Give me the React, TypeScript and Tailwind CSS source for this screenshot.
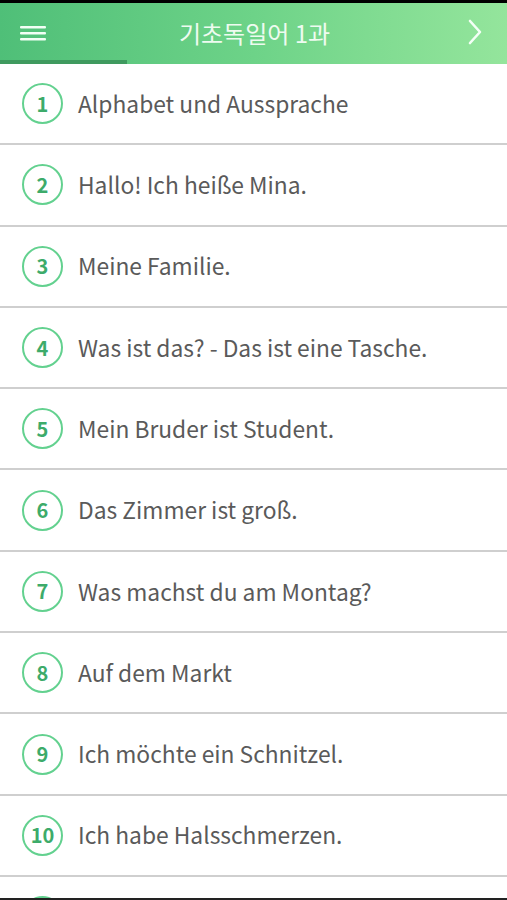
const lessons = [
  "Alphabet und Aussprache",
  "Hallo! Ich heiße Mina.",
  "Meine Familie.",
  "Was ist das? - Das ist eine Tasche.",
  "Mein Bruder ist Student.",
  "Das Zimmer ist groß.",
  "Was machst du am Montag?",
  "Auf dem Markt",
  "Ich möchte ein Schnitzel.",
  "Ich habe Halsschmerzen.",
  "Wie komme ich zum Bahnhof?",
];

function Row({ n, title }: { n: number; title: string }) {
  return (
    <div className="h-[81.3px] shrink-0 flex items-center border-b-2 border-[#cfcfcf] bg-white pl-[22px]">
      <div className="w-[41px] h-[41px] shrink-0 rounded-full border-2 border-[#63d18f] flex items-center justify-center text-[#3dab6a] font-semibold text-[20px] leading-none">
        {n}
      </div>
      <span className="ml-[15px] text-[22.8px] text-[#5a5a5a] leading-none pt-[1px] whitespace-nowrap">{title}</span>
    </div>
  );
}

export default function App() {
  return (
    <div
      className="w-[507px] h-[900px] overflow-hidden flex flex-col bg-white"
      style={{ fontFamily: '"Noto Sans CJK KR", "Noto Sans", sans-serif' }}
    >
      <div className="h-[3px] bg-black shrink-0" />
      <header className="shrink-0 bg-gradient-to-r from-[#4fbf78] via-[#6dd388] to-[#94e59c]">
        <div className="h-[57px] flex items-center justify-between px-[20px]">
          <svg width="26" height="16" viewBox="0 0 26 16" className="mt-[2px]">
            <rect x="0" y="1" width="26" height="2.6" rx="1" fill="#f2fff5" />
            <rect x="0" y="7" width="26" height="2.6" rx="1" fill="#f2fff5" />
            <rect x="0" y="13" width="26" height="2.6" rx="1" fill="#f2fff5" />
          </svg>
          <h1 className="text-[24px] text-[#eefbf0] font-normal mt-[3px] mr-[4px]">기초독일어 1과</h1>
          <svg width="16" height="26" viewBox="0 0 16 26" className="mr-[4px]">
            <path d="M3 2 L13 13 L3 24" fill="none" stroke="#f4fff6" strokeWidth="2.6" strokeLinecap="round" strokeLinejoin="round" />
          </svg>
        </div>
        <div className="h-[4px] w-[127px] bg-[#3f9a5f]" />
      </header>
      <main className="flex-1 flex flex-col min-h-0">
        {lessons.map((t, i) => (
          <Row key={i} n={i + 1} title={t} />
        ))}
      </main>
      <div className="h-[2px] bg-[#222] shrink-0" />
    </div>
  );
}
